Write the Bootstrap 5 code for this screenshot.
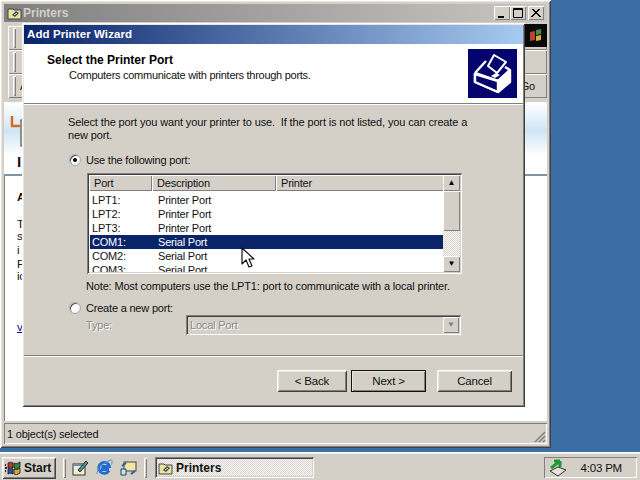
<!DOCTYPE html>
<html lang="en">
<head>
<meta charset="utf-8">
<title>Add Printer Wizard</title>
<link href="https://cdn.jsdelivr.net/npm/bootstrap@5.3.0/dist/css/bootstrap.min.css" rel="stylesheet">
<style>
html,body{height:100%;margin:0}
body{width:640px;height:480px;overflow:hidden;background:#3a6ea5;position:relative;font-family:"Liberation Sans",Arial,sans-serif;font-size:11px;letter-spacing:-.2px;line-height:14px;color:#111}
.raised{background:#d4d0c8;box-shadow:inset 1px 1px 0 #fff,inset -1px -1px 0 #404040,inset 2px 2px 0 #e8e6e0,inset -2px -2px 0 #808080}
.soft{background:#d4d0c8;box-shadow:inset 1px 1px 0 #fff,inset -1px -1px 0 #808080}
.sunken{box-shadow:inset 1px 1px 0 #808080,inset -1px -1px 0 #fff}
.deep{box-shadow:inset 1px 1px 0 #808080,inset -1px -1px 0 #fff,inset 2px 2px 0 #404040,inset -2px -2px 0 #d4d0c8}
.explorer{position:absolute;left:0;top:0;width:551px;height:448px;padding:4px}
.ex-title{height:18px;background:linear-gradient(90deg,#808080,#c8c6c2);color:#d4d0c8;font-weight:700;font-size:12px;letter-spacing:0;padding:0 0 0 3px;flex:none}
.caps{gap:0;margin-right:3px}
.cap{width:16px;height:14px;font-size:10px}
.cap+.cap+.cap{margin-left:2px}
.ex-band{height:24px;flex:none;padding:0 12px 0 5px;margin-left:4px}
.ex-band .grip{width:3px;height:20px;box-shadow:inset 1px 1px 0 #fff,inset -1px -1px 0 #808080}
.ex-logo{position:absolute;left:524px;top:24px;width:23px;height:23px;background:#0a0a0a;overflow:hidden}
.ex-page{background:#fff;margin-top:4px;min-height:0;position:relative;overflow:hidden}
.hero{height:74px;background:linear-gradient(180deg,#fff 0,#cfe6f5 40%,#fff 75%);border-bottom:2px solid #7f93a3}
.stub{position:absolute;left:13px;font-size:11.5px}
.ex-status{height:21px;flex:none;margin-top:2px;padding:4px 3px 3px}
.wizard{position:absolute;left:22px;top:23px;width:503px;height:384px;padding:2px;display:flex;flex-direction:column}
.wz-title{height:19px;flex:none;background:linear-gradient(90deg,#0a246a,#a6caf0);color:#fff;font-weight:700;padding:0 3px 2px;font-size:11.5px;letter-spacing:.1px}
.wz-head{height:60px;flex:none;background:#fff;border-bottom:1px solid #808080;box-shadow:0 1px 0 #fff;padding:5px 6px 0 23px;justify-content:space-between}
.wz-head b{display:block;margin-top:4px;color:#000;font-size:12px;letter-spacing:0}
.wz-head p{margin:1px 0 0 22px;letter-spacing:-.28px}
.wz-body{height:251px;flex:none;padding:12px 0 0 44px;position:relative}
.wz-body p{margin:0;width:402px;line-height:13px;letter-spacing:-.13px}
.radio-row{padding-left:18px;position:relative;height:14px}
.dot{position:absolute;left:1px;top:1px;width:12px;height:12px;border-radius:50%;background:#fff;box-shadow:inset 1px 1px 0 #555,inset -1px -1px 0 #eee;border:1px solid #aaa}
.dot.on::after{content:"";position:absolute;left:3px;top:3px;width:4px;height:4px;border-radius:50%;background:#000}
.use-port{margin-top:11px}
.lv{width:375px;height:101px;margin-left:19px;margin-top:6px;padding:2px;background:#fff;display:flex}
.lv-main{flex:1;min-width:0;overflow:hidden}
.lv-head{height:16px}
.lv-head div{height:16px;padding:1px 5px;flex:none}
.cw-port{width:63px}
.cw-desc{width:124px}
.cw-prn{width:168px}
.lv-rows{padding-top:2px;height:83px;overflow:hidden}
.lv-row{height:14px;padding-left:2px;margin-left:1px;display:flex;align-items:center}
.lv-row span:first-child{width:66px;flex:none}
.lv-row.sel{background:#0a246a;color:#fff}
.sb{width:17px;flex:none;display:flex;flex-direction:column;background-color:#e6e3dd;background-image:repeating-conic-gradient(#fff 0 25%,#d4d0c8 0 50%);background-size:2px 2px}
.sb-btn{height:16px;flex:none;font-size:8px;line-height:15px;text-align:center;color:#000;letter-spacing:0}
.sb-thumb{height:40px;flex:none}
.wz-body p.note{margin:6px 0 0 18px;width:auto;letter-spacing:-.16px}
.new-port{margin-top:8px}
.type-row{padding-left:18px}
.muted-type{color:#8a8a88;width:100px;flex:none;text-shadow:1px 1px 0 #fff}
.combo{width:275px;height:20px;padding:2px 2px 2px 4px;background:#d4d0c8;justify-content:space-between}
.combo .sb-btn{width:16px;height:16px;color:#808080}
.wz-foot{flex:1;border-top:1px solid #808080;box-shadow:inset 0 1px 0 #fff;padding:14px 11px 0 0;justify-content:flex-end}
.wz-btn.btn{width:70px;height:22px;padding:0;border:0;border-radius:0;font-size:11.5px;letter-spacing:-.2px;line-height:20px;color:#111;background:#d4d0c8}
.wz-btn.next{width:75px;margin-left:4px;outline:1px solid #111;outline-offset:-1px}
.wz-btn.cancel{width:75px;margin-left:11px}
.taskbar{position:absolute;left:0;top:452px;width:640px;height:28px;background:#d4d0c8;border-top:1px solid #fff;box-shadow:inset 0 1px 0 #eee;padding:4px 3px 2px 2px}
.start{width:54px;height:22px;padding:0 3px;font-weight:700;font-size:12px;letter-spacing:0;gap:1px}
.tb-grip{width:3px;height:20px;margin-left:7px;box-shadow:inset 1px 1px 0 #fff,inset -1px -1px 0 #808080;flex:none}
.ql{margin-left:6px;gap:7px;width:68px}
.grip-b{margin-left:4px}
.task{width:159px;height:21px;margin-left:8px;padding:0 3px;font-weight:700;font-size:12px;letter-spacing:0;gap:2px;background-color:#ece9e3;background-image:repeating-conic-gradient(#fff 0 25%,#d4d0c8 0 50%);background-size:2px 2px}
.tray{width:93px;height:21px;margin-left:auto;padding:0 15px 0 4px;justify-content:space-between;font-size:11.5px}
.cursor{position:absolute;left:241px;top:247px;width:14px;height:22px;pointer-events:none}
.over{position:absolute}
</style>
</head>
<body>

<div class="explorer raised d-flex flex-column">
  <div class="ex-title d-flex align-items-center">
    <svg width="16" height="14" viewBox="0 0 16 14"><path d="M1 3h5l1 1h7v9H1z" fill="#e8e4a0" stroke="#444"/><path d="M5 9l4-4 3 2-4 4z" fill="#444"/><path d="M7 9l3-2" stroke="#eee"/></svg>
    <span>Printers</span>
    <div class="caps d-flex ms-auto">
      <div class="cap soft"><svg class="d-block" width="16" height="14"><rect x="4" y="10" width="6" height="2" fill="#000"/></svg></div>
      <div class="cap soft"><svg class="d-block" width="16" height="14"><path d="M3.5 2.500h9v9h-9z M3 3.500h10" fill="none" stroke="#000"/></svg></div>
      <div class="cap soft"><svg class="d-block" width="16" height="14"><path d="M4 3l8 8M12 3l-8 8M5 3l8 8M11 3l-8 8" stroke="#000"/></svg></div>
    </div>
  </div>
  <div class="ex-band soft d-flex align-items-center mt-1"><div class="grip"></div></div>
  <div class="ex-band soft d-flex align-items-center"><div class="grip"></div></div>
  <div class="ex-band soft d-flex align-items-center"><div class="grip"></div><span class="ms-1">A</span><span class="ms-auto">Go</span></div>
  <div class="ex-page sunken flex-grow-1">
    <div class="hero"></div>
    <svg class="over" style="left:4px;top:8px" width="18" height="38" viewBox="0 0 18 38"><path d="M4 6v10h8" fill="none" stroke="#d96a1e" stroke-width="2.5"/><rect x="13" y="10" width="5" height="26" fill="#f5efa8" stroke="#333"/></svg>
    <b class="stub" style="top:53px;font-size:15px">I</b>
    <b class="stub" style="top:88px">A</b>
    <span class="stub" style="top:115px">T</span>
    <span class="stub" style="top:127px">s</span>
    <span class="stub" style="top:141px">i</span>
    <span class="stub" style="top:155px">P</span>
    <span class="stub" style="top:167px">ic</span>
    <span class="stub text-decoration-underline" style="top:218px;color:#00008b">v</span>
  </div>
  <div class="ex-status sunken position-relative">1 object(s) selected
    <svg class="over" style="right:1px;bottom:1px" width="12" height="12"><path d="M11 1L1 11M11 5L5 11M11 9L9 11" stroke="#808080" stroke-width="1.5"/></svg>
  </div>
</div>
<div class="ex-logo"><svg width="23" height="23"><path d="M6 8l5-1v9l-5 1z" fill="#b5482c"/><path d="M12 6l5-1v5l-5 1z" fill="#3f8f45"/><path d="M12 12l5-1v5l-5 1z" fill="#d8b13a"/></svg></div>

<div class="wizard raised">
  <div class="wz-title d-flex align-items-center">Add Printer Wizard</div>
  <div class="wz-head d-flex">
    <div>
      <b>Select the Printer Port</b>
      <p>Computers communicate with printers through ports.</p>
    </div>
    <svg width="49" height="49" viewBox="0 0 49 49">
      <rect width="49" height="49" fill="#04046e"/>
      <path d="M7 24L20 10L42 21V33L30 43L7 33Z" fill="#04046e"/>
      <path d="M7 24L18 12M7 24L30 32L42 21L37 18M7 24V33L30 43L42 33V21M30 32V43" fill="none" stroke="#fff" stroke-width="2.4" stroke-linejoin="round"/>
      <path d="M7 25V33L30 43V33Z" fill="#04046e"/>
      <path d="M7 25V33L30 43V32Z" fill="none" stroke="#fff" stroke-width="2.4" stroke-linejoin="round"/>
      <path d="M30 33V42L41 33V22Z" fill="#fff"/>
      <path d="M20 17L26 6L38 13L29 24Z" fill="#04046e" stroke="#fff" stroke-width="2" stroke-linejoin="round"/>
      <path d="M23 27l5-3 4 2-5 3z" fill="#fff"/>
    </svg>
  </div>
  <div class="wz-body">
    <p>Select the port you want your printer to use.&nbsp; If the port is not listed, you can create a new port.</p>
    <div class="radio-row use-port"><i class="dot on"></i>Use the following port:</div>
    <div class="lv deep">
      <div class="lv-main">
        <div class="lv-head d-flex">
          <div class="soft cw-port">Port</div>
          <div class="soft cw-desc">Description</div>
          <div class="soft cw-prn">Printer</div>
        </div>
        <div class="lv-rows">
          <div class="lv-row"><span>LPT1:</span><span>Printer Port</span></div>
          <div class="lv-row"><span>LPT2:</span><span>Printer Port</span></div>
          <div class="lv-row"><span>LPT3:</span><span>Printer Port</span></div>
          <div class="lv-row sel"><span>COM1:</span><span>Serial Port</span></div>
          <div class="lv-row"><span>COM2:</span><span>Serial Port</span></div>
          <div class="lv-row"><span>COM3:</span><span>Serial Port</span></div>
        </div>
      </div>
      <div class="sb">
        <div class="sb-btn soft">▲</div>
        <div class="sb-thumb soft"></div>
        <div class="sb-btn soft mt-auto">▼</div>
      </div>
    </div>
    <p class="note">Note: Most computers use the LPT1: port to communicate with a local printer.</p>
    <div class="radio-row new-port"><i class="dot"></i>Create a new port:</div>
    <div class="type-row d-flex align-items-center">
      <span class="muted-type">Type:</span>
      <div class="combo deep d-flex align-items-center"><span class="muted-type">Local Port</span><div class="sb-btn soft">▼</div></div>
    </div>
  </div>
  <div class="wz-foot d-flex">
    <button type="button" class="wz-btn raised btn">&lt; Back</button>
    <button type="button" class="wz-btn next raised btn">Next &gt;</button>
    <button type="button" class="wz-btn cancel raised btn">Cancel</button>
  </div>
</div>

<svg class="cursor" viewBox="0 0 14 22"><path d="M1 1V17L5 13L8 20L11 19L8 12H13Z" fill="#fff" stroke="#111" stroke-width="1.2" stroke-linejoin="round"/></svg>

<div class="taskbar d-flex align-items-center">
  <div class="start raised d-flex align-items-center">
    <svg width="18" height="16" viewBox="0 0 18 16"><path d="M0 5h1M0 8h2M0 11h1" stroke="#222" stroke-width="2"/><path d="M3 3C5 2 6 2 8 3V8C6 7 5 7 3 8Z" fill="#c0392b" stroke="#111" stroke-width=".8"/><path d="M9 3C11 4 12 4 15 2V7C12 9 11 9 9 8Z" fill="#2e8b3d" stroke="#111" stroke-width=".8"/><path d="M3 9C5 8 6 8 8 9V14C6 13 5 13 3 14Z" fill="#2a4fb0" stroke="#111" stroke-width=".8"/><path d="M9 9C11 10 12 10 15 8V13C12 15 11 15 9 14Z" fill="#d8a92c" stroke="#111" stroke-width=".8"/></svg>
    <span>Start</span>
  </div>
  <div class="tb-grip"></div>
  <div class="ql d-flex align-items-center">
    <svg width="17" height="16" viewBox="0 0 17 16"><rect x="1" y="4" width="12" height="11" fill="#efeccf" stroke="#333"/><path d="M1 4h12v2H1z" fill="#6f8fb0"/><path d="M6 10L14 1l2 2-8 9z" fill="#5a8f7a" stroke="#234"/></svg>
    <svg width="17" height="17" viewBox="0 0 17 17"><path d="M13 11.500A5.500 5.500 0 1 1 13.500 7.500H5.500M5 10.500H13" fill="none" stroke="#1f6fd0" stroke-width="2.800"/><path d="M1 15C0 12 7 3 15 1C17 1 16 5 15 6" fill="none" stroke="#5b8fd8" stroke-width="1"/></svg>
    <svg width="17" height="16" viewBox="0 0 17 16"><rect x="4" y="2" width="12" height="9" fill="#f0e6a8" stroke="#444"/><path d="M1 9h5v6H1z" fill="#cfe0f5" stroke="#245"/><path d="M6 3L2 6M11 14l4-3" stroke="#1f5fb0" stroke-width="2"/></svg>
  </div>
  <div class="tb-grip grip-b"></div>
  <div class="task deep d-flex align-items-center">
    <svg width="16" height="14" viewBox="0 0 16 14"><path d="M1 3h5l1 1h7v9H1z" fill="#e8e4a0" stroke="#444"/><path d="M5 9l4-4 3 2-4 4z" fill="#444"/><path d="M7 9l3-2" stroke="#eee"/></svg>
    <span>Printers</span>
  </div>
  <div class="tray sunken d-flex align-items-center">
    <svg width="20" height="18" viewBox="0 0 20 18"><path d="M2 12l8-4 8 3-8 6z" fill="#e6e4d8" stroke="#333"/><path d="M3 9L12 2M12 2H6M12 2V8" fill="none" stroke="#1f9a3a" stroke-width="3"/></svg>
    <span>4:03 PM</span>
  </div>
</div>

</body>
</html>
